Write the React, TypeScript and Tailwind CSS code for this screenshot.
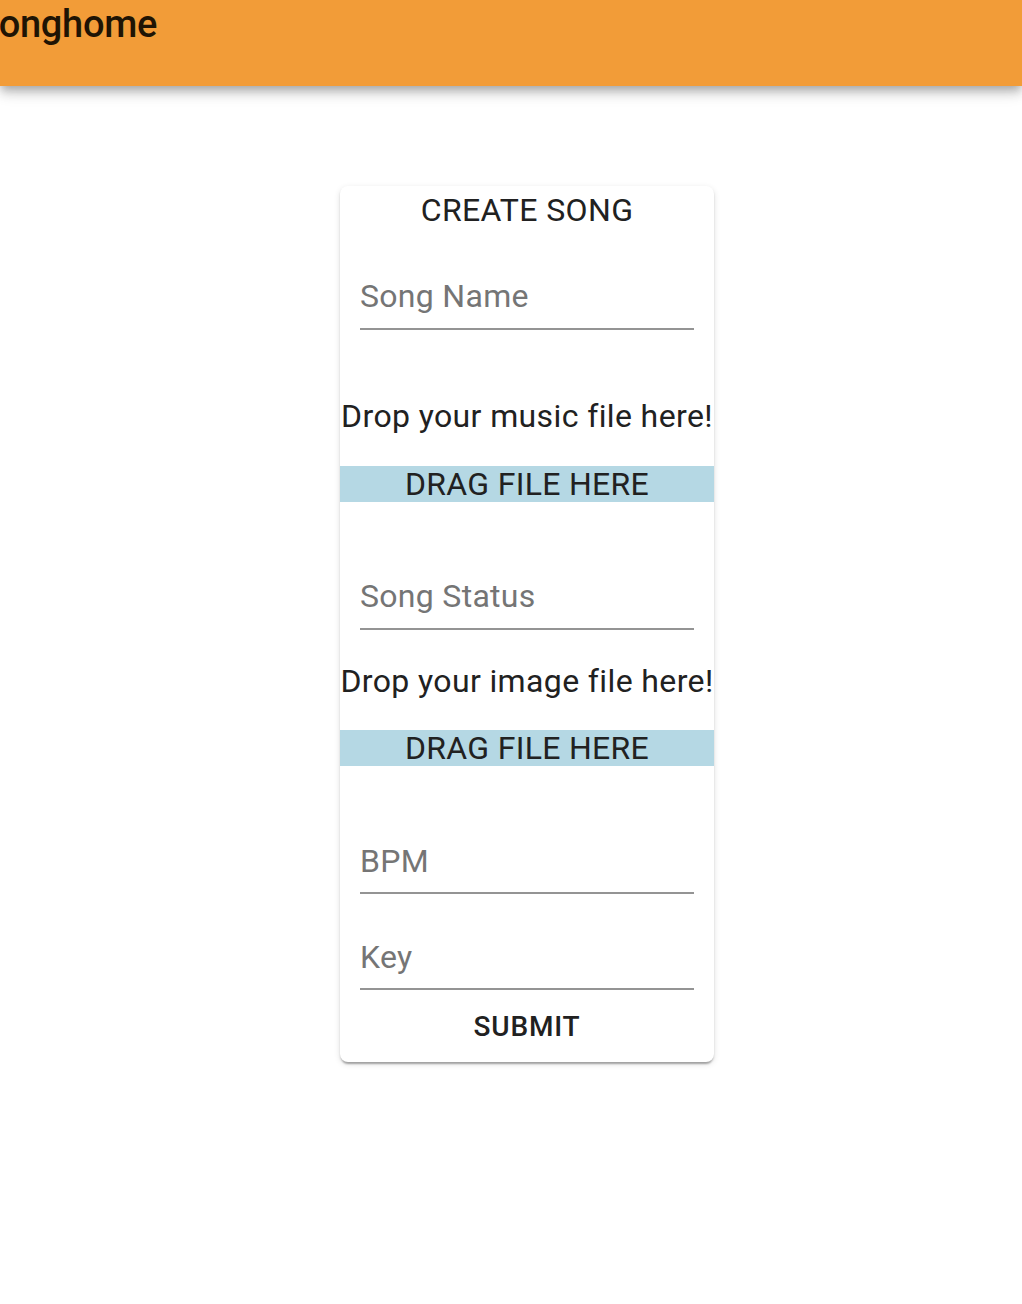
import React from "react";

function Field({ label, className = "" }: { label: string; className?: string }) {
  return (
    <div className={`mx-[20px] border-b-2 border-[#949494] pb-[14px] ${className}`}>
      <div className="text-[32px] leading-[36px] tracking-[0.3px] text-[#757575]">{label}</div>
    </div>
  );
}

function DropZone({ prompt, className = "" }: { prompt: string; className?: string }) {
  return (
    <div className={className}>
      <p className="whitespace-nowrap text-center text-[32px] leading-[36px] tracking-[0.38px] text-[#212121]">
        {prompt}
      </p>
      <div className="mt-[32px] bg-[#b5d8e4] text-center text-[32px] leading-[36px] tracking-[0.3px] text-[#212121]">
        DRAG FILE HERE
      </div>
    </div>
  );
}

export default function App() {
  return (
    <div className="min-h-[1304px] overflow-hidden bg-white font-[Roboto,sans-serif]">
      {/* App bar */}
      <header className="relative z-10 h-[86px] bg-[#f29c38] shadow-[0_4px_8px_-2px_rgba(0,0,0,0.2),0_8px_10px_0_rgba(0,0,0,0.14),0_2px_20px_0_rgba(0,0,0,0.12)]">
        <h1 className="-ml-[24px] pt-[5px] text-[38px] font-medium leading-none tracking-[-0.3px] text-[#1f1404]">
          Songhome
        </h1>
      </header>

      {/* Create song card */}
      <div className="ml-[340px] mt-[100px] w-[374px] overflow-hidden rounded-[8px] bg-white shadow-[0_4px_2px_-2px_rgba(0,0,0,0.2),0_2px_2px_0_rgba(0,0,0,0.14),0_2px_6px_0_rgba(0,0,0,0.12)]">
        <h2 className="pt-[6px] text-center text-[32px] leading-[36px] tracking-[0.38px] text-[#212121]">
          CREATE SONG
        </h2>

        <Field label="Song Name" className="mt-[50px]" />
        <DropZone prompt="Drop your music file here!" className="mt-[68px]" />

        <Field label="Song Status" className="mt-[76px]" />
        <div className="mt-[33px]">
          <p className="whitespace-nowrap text-center text-[32px] leading-[36px] tracking-[0.38px] text-[#212121]">
            Drop your image file here!
          </p>
          <div className="mt-[31px] bg-[#b5d8e4] text-center text-[32px] leading-[36px] tracking-[0.3px] text-[#212121]">
            DRAG FILE HERE
          </div>
        </div>

        <div className="mx-[20px] mt-[77px] border-b-2 border-[#949494] pb-[13px]">
          <div className="text-[32px] leading-[36px] tracking-[0.3px] text-[#757575]">BPM</div>
        </div>
        <div className="mx-[20px] mt-[45px] border-b-2 border-[#949494] pb-[13px]">
          <div className="text-[32px] leading-[36px] tracking-[0.3px] text-[#757575]">Key</div>
        </div>

        <button className="block h-[72px] w-full px-[16px] py-[12px] text-center text-[28px] font-medium uppercase leading-[49px] tracking-[0.8px] text-[#212121]">
          Submit
        </button>
      </div>
    </div>
  );
}
